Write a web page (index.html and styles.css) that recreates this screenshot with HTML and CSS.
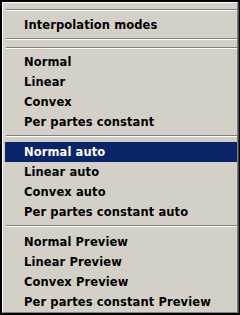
FILE: index.html
```html
<!DOCTYPE html>
<html lang="en">
<head>
    <meta charset="UTF-8">
    <title>Interpolation modes</title>
    <link rel="stylesheet" href="styles.css">
</head>
<body>
    <!-- Popup menu -->
    <div class="menu">
        <div class="sep sep-top"></div>
        <div class="title">Interpolation modes</div>
        <div class="sep sep-title"></div>
        <div class="sep sep-double"></div>

        <ul class="group">
            <li>Normal</li>
            <li>Linear</li>
            <li>Convex</li>
            <li>Per partes constant</li>
        </ul>
        <div class="sep"></div>
        <ul class="group">
            <li class="selected">Normal auto</li>
            <li>Linear auto</li>
            <li>Convex auto</li>
            <li>Per partes constant auto</li>
        </ul>
        <div class="sep"></div>
        <ul class="group">
            <li>Normal Preview</li>
            <li>Linear Preview</li>
            <li>Convex Preview</li>
            <li>Per partes constant Preview</li>
        </ul>
    </div>
</body>
</html>
```

FILE: styles.css
```css
/* Classic grey popup menu */
body {
    margin: 0;
    background-color: #000;
    font-family: "DejaVu Sans", Verdana, sans-serif;
    font-size: 11.5px;
    font-weight: bold;
    letter-spacing: 0.1px;
}
.menu {
    box-sizing: border-box;
    width: 236px;
    height: 311px;
    margin: 2px 0 0 2px;
    padding-top: 6px;
    background-color: #d4d0c8;
    border-top: 1px solid #fff;
    border-left: 1px solid #fff;
    border-right: 1px solid #808080;
    border-bottom: 1px solid #808080;
    box-shadow: 1px 1px 0 #404040;
    color: #000;
}
.sep {
    height: 0;
    margin: 3px 0 5px 3px;
    border-top: 1px solid #808080;
    border-bottom: 1px solid #fff;
}
.sep-top {
    margin: 0 0 4px 3px;
}
.title {
    height: 20px;
    line-height: 21px;
    padding-left: 21px;
}
.sep-title {
    margin-bottom: 7px;
}
.sep-double {
    margin-top: 0;
    margin-bottom: 3px;
}
.group {
    list-style: none;
    margin: 0;
    padding: 0;
}
.group li {
    height: 20px;
    line-height: 21px;
    padding-left: 19px;
    margin-left: 2px;
}
.group li.selected {
    background-color: #0a246a;
    color: #fff;
}
```
